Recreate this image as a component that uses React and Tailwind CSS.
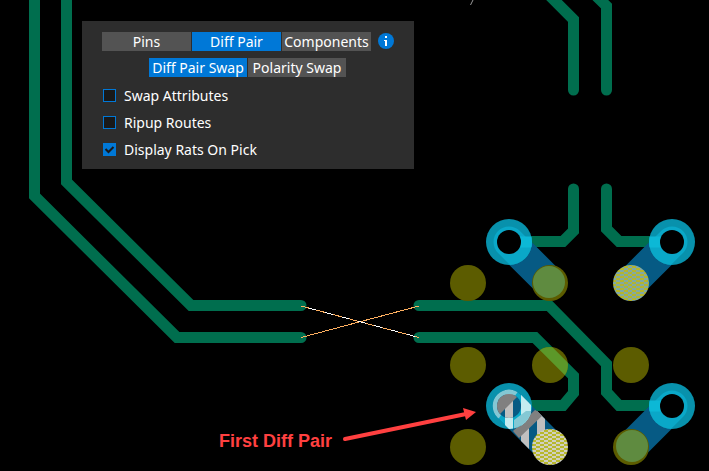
import React from "react";

const GREEN = "#006e4e";

const traces = [
  "M34.5 -10V196L177 337.5H301",
  "M66.5 -10V182L191 305.5H301",
  "M544 -10L573.5 19.5V90",
  "M590 -10L606.5 6V90",
  "M573.5 189V231L563 241.5H509",
  "M606.5 189V229L619 241.5H672",
  "M419 305.5H549L606.5 364V392L619 405.5H672",
  "M419 337.5H535L573.5 376V393L563 405.5H509",
];

const pads = [
  [468, 283],
  [550, 283],
  [468, 365],
  [550, 365],
  [631, 365],
  [468, 447],
  [631, 447],
];

const vias = [
  { id: "via1", x: 509, y: 242, tx: 549, ty: 282 },
  { id: "via2", x: 672, y: 242, tx: 632, ty: 282 },
  { id: "via3", x: 672, y: 406, tx: 632, ty: 446 },
];

function Via({ id, x, y, tx, ty }) {
  return (
    <g>
      <clipPath id={id}>
        <circle cx={x} cy={y} r="23" />
      </clipPath>
      <circle cx={x} cy={y} r="23" fill="#0891ac" />
      <g clipPath={`url(#${id})`}>
        <path d={`M${x} ${y}L${tx} ${ty}`} stroke="#0aa8c8" strokeWidth="31" strokeLinecap="round" />
        <path d={`M${x} ${y}H${tx}`} stroke="#0cb8d6" strokeWidth="11" />
      </g>
      <circle cx={x} cy={y} r="12" fill="#000" />
    </g>
  );
}

function PickedVia() {
  return (
    <g>
      <clipPath id="pickedTrack">
        <path d="M497.5 417.5A16 16 0 0 1 520.5 394.5L560.5 434.5A16 16 0 0 1 537.5 457.5Z" />
      </clipPath>
      <clipPath id="pickedRing">
        <circle cx="509" cy="406" r="23" />
      </clipPath>
      <clipPath id="pickedHole">
        <circle cx="509" cy="406" r="12" />
      </clipPath>
      <circle cx="509" cy="406" r="23" fill="#0891ac" />
      <g clipPath="url(#pickedTrack)">
        <rect x="480" y="380" width="100" height="91" fill="#065a84" />
        <path d="M521 380H529V471H521Z M537 380H545V471H537Z" fill="#c0c0c0" />
        <path d="M513 431L535 410L544 414L519 438Z" fill="#808080" />
        <g clipPath="url(#pickedRing)">
          <rect x="480" y="380" width="60" height="60" fill="#0aa8c8" />
          <path d="M505 380H513V430H505Z M521 380H531V430H521Z" fill="#c4ecf0" />
          <path d="M490 424V386H522L499 418Z" fill="#84c8d4" />
          <path d="M514 431V420L526 411H540V431Z" fill="#84c8d4" />
        </g>
        <g clipPath="url(#pickedHole)">
          <rect x="497" y="394" width="24" height="24" fill="#065a84" />
          <rect x="505" y="394" width="8" height="24" fill="#c0c0c0" />
          <path d="M495 418V392H522L498 416Z" fill="#808080" />
        </g>
      </g>
      <circle cx="550" cy="447" r="18" fill="url(#weaveLight)" />
    </g>
  );
}

function Board() {
  return (
    <svg className="absolute left-0 top-0" width="709" height="471" viewBox="0 0 709 471" aria-hidden="true">
      <defs>
        <pattern id="weave" width="8" height="4" patternUnits="userSpaceOnUse">
          <rect width="8" height="4" fill="#b5b52b" />
          <path d="M0 0H4V2H0Z M4 2H8V4H4Z" fill="#80a9a6" />
        </pattern>
        <pattern id="weaveLight" width="8" height="4" patternUnits="userSpaceOnUse">
          <rect width="8" height="4" fill="#b8b82b" />
          <path d="M0 0H4V2H0Z M4 2H8V4H4Z" fill="#d0d0c0" />
        </pattern>
      </defs>

      <g fill="none" stroke={GREEN} strokeWidth="11" strokeLinecap="round">
        {traces.map((d) => (
          <path key={d} d={d} />
        ))}
      </g>

      {vias.map((v) => (
        <path key={v.id} d={`M${v.x} ${v.y}L${v.tx} ${v.ty}`} stroke="#065a84" strokeWidth="32" strokeLinecap="round" />
      ))}

      {pads.map(([x, y]) => (
        <circle key={`${x}-${y}`} cx={x} cy={y} r="18" fill="#5c5c00" />
      ))}
      <circle cx="549" cy="282" r="16" fill="#5f8b40" />
      <circle cx="632" cy="446" r="16" fill="#5f8b40" />
      <clipPath id="crossedPad">
        <circle cx="550" cy="365" r="18" />
      </clipPath>
      <path d="M535 337.5L573.5 376" stroke="#5c9829" strokeWidth="11" clipPath="url(#crossedPad)" />
      <circle cx="631" cy="283" r="18" fill="url(#weave)" />

      {vias.map((v) => (
        <Via key={v.id} {...v} />
      ))}
      <PickedVia />

      <g shapeRendering="crispEdges" stroke="#ffb060" strokeWidth="1">
        <path d="M301 337.5L419 306" />
        <path d="M301 306L419 337.5" />
        <path d="M301 306L419 337.5" stroke="#fff" strokeDasharray="8 9" strokeDashoffset="-8" />
      </g>
      <path d="M470.5 5L473 0" stroke="#999" strokeWidth="1" />

      <path d="M345 439L466 414" stroke="#ff4040" strokeWidth="4" strokeLinecap="round" />
      <path d="M463 408L476 412L466 420Z" fill="#ff4040" />
    </svg>
  );
}

function Tab({ active, className, children }) {
  return (
    <button type="button" aria-pressed={!!active} className={`h-[19px] whitespace-nowrap text-center leading-[19px] ${active ? "bg-[#0078d7]" : "bg-[#535353]"} ${className}`}>
      {children}
    </button>
  );
}

function Option({ id, label, defaultChecked }) {
  return (
    <div className="flex h-[27px] items-center">
      <span className="grid">
        <input
          id={id}
          type="checkbox"
          defaultChecked={defaultChecked}
          className="peer col-start-1 row-start-1 size-[13px] appearance-none border border-[#0078d7] bg-[#191919] checked:bg-[#0078d7]"
        />
        <svg className="pointer-events-none invisible col-start-1 row-start-1 size-[13px] peer-checked:visible" viewBox="0 0 13 13" fill="none" aria-hidden="true">
          <path d="M2.5 6L5.5 9L10.5 4" stroke="#191919" strokeWidth="2" />
        </svg>
      </span>
      <label htmlFor={id} className="pl-2">
        {label}
      </label>
    </div>
  );
}

export default function App() {
  return (
    <main className="relative min-h-screen overflow-hidden bg-black font-['Noto_Sans',sans-serif] text-sm text-white">
      <Board />
      <section className="absolute left-[82px] top-[21px] w-[332px] bg-[#2d2d2d] px-5 pb-1.5 pt-2.5">
        <div className="flex h-5 items-center gap-px">
          <Tab className="w-[89px]">Pins</Tab>
          <Tab active className="w-[89px]">Diff Pair</Tab>
          <Tab className="w-[89px]">Components</Tab>
          <button type="button" aria-label="Info" className="ml-1.5">
            <svg className="size-4" viewBox="0 0 16 16" aria-hidden="true">
              <circle cx="8" cy="8" r="8" fill="#0078d7" />
              <path d="M6 7H9V13H7V8H6Z M7 3H9V5H7Z" fill="#fff" />
            </svg>
          </button>
        </div>
        <div className="mt-[7px] flex gap-px pl-[47px]">
          <Tab active className="w-[98px]">Diff Pair Swap</Tab>
          <Tab className="w-[98px]">Polarity Swap</Tab>
        </div>
        <div className="mt-[5px] px-px">
          <Option id="attributes" label="Swap Attributes" />
          <Option id="ripup" label="Ripup Routes" />
          <Option id="rats" label="Display Rats On Pick" defaultChecked />
        </div>
      </section>
      <p className="absolute left-[219px] top-[431px] font-['Liberation_Sans',sans-serif] text-lg font-bold leading-5 text-[#ff4040]">First Diff Pair</p>
    </main>
  );
}
